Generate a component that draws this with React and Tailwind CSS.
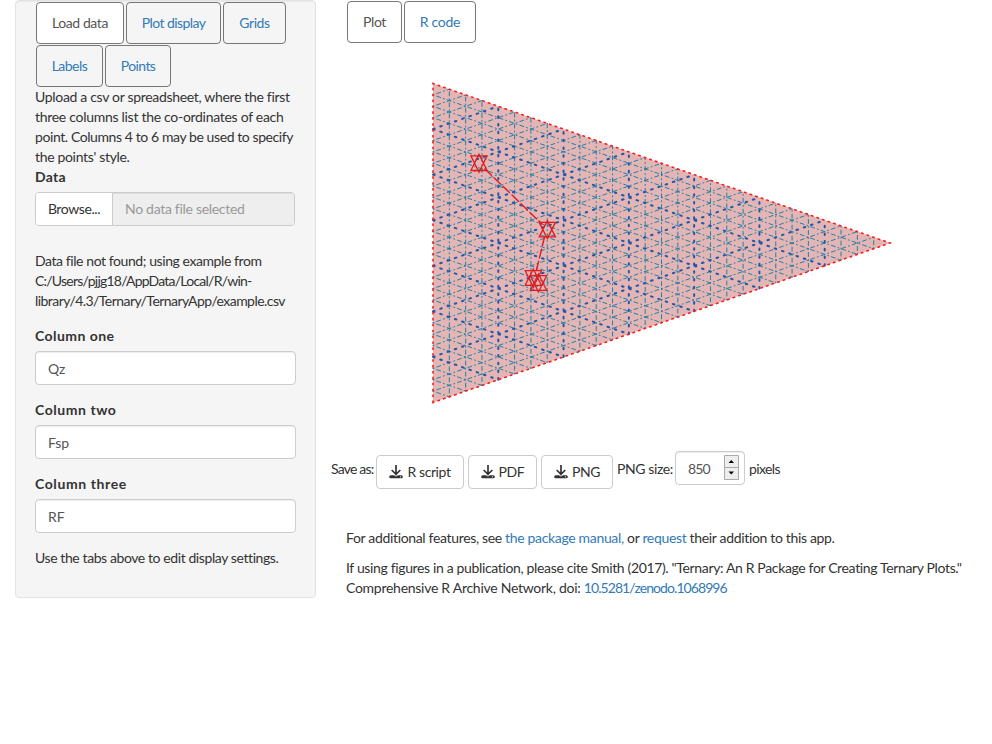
import React from "react";

const LEFT = 433;
const TOP = 83.5;
const BOTTOM = 402.5;
const TIP_X = 890;
const TIP_Y = 243;

function gridLines() {
  const minor = [];
  const major = [];
  const n = 28;
  for (let k = 1; k < n; k++) {
    const f = k / n;
    const x = LEFT + (TIP_X - LEFT) * f;
    const yTop = TOP + (TIP_Y - TOP) * f;
    const yBot = BOTTOM + (TIP_Y - BOTTOM) * f;
    const side = TOP + (BOTTOM - TOP) * f;
    const xr = LEFT + (TIP_X - LEFT) * (1 - f);
    const segs = [
      [x, yBot, x, yTop],
      [LEFT, side, xr, BOTTOM + (TIP_Y - BOTTOM) * (1 - f)],
      [LEFT, TOP + BOTTOM - side, xr, TOP + (TIP_Y - TOP) * (1 - f)],
    ];
    (k % 4 === 0 ? major : minor).push(...segs);
  }
  return { minor, major };
}

const toPath = (segs) => segs.map(([a, b, c, d]) => `M${a} ${b}L${c} ${d}`).join("");

function Star({ x, y }) {
  const apex = 9;
  const base = 7.3;
  const w = 8.1;
  return (
    <path
      d={`M${x} ${y - apex}L${x + w} ${y + base}H${x - w}ZM${x} ${y + apex}L${x + w} ${y - base}H${x - w}Z`}
      strokeWidth="1.3"
    />
  );
}

function TernaryPlot() {
  const { minor, major } = gridLines();
  const triangle = `M${LEFT} ${BOTTOM}V${TOP}L${TIP_X} ${TIP_Y}Z`;
  return (
    <svg className="block h-[400px] w-[645px]" viewBox="331 45 645 400" fill="none" strokeLinecap="round">
      <path d={triangle} fill="#e3b5b5" />
      <path d={toPath(minor)} stroke="#2380a4" strokeWidth="1" strokeDasharray="1 3 4 3" />
      <path d={toPath(major)} stroke="#2058ac" strokeWidth="2" strokeDasharray="1.6 6.1" />
      <path d={triangle} stroke="#f81c1c" strokeWidth="1.6" strokeDasharray="1.5 4.4" />
      <g stroke="#e31a1c">
        <path d="M485 169L542 224M544.5 237L536.5 270" strokeWidth="1.4" strokeDasharray="9 3.5" />
        <Star x={479} y={163.2} />
        <Star x={547.3} y={229.6} />
        <Star x={533.3} y={278} />
        <Star x={538.5} y={283} />
      </g>
    </svg>
  );
}

function Tab({ children, active, className }) {
  return (
    <button
      className={`h-[42px] shrink-0 whitespace-nowrap rounded border border-[#777] text-center ${
        active ? "bg-white text-[#555]" : "text-[#337ab7]"
      } ${className}`}
    >
      {children}
    </button>
  );
}

function Line({ children, className = "" }) {
  return <span className={`block whitespace-nowrap ${className}`}>{children}</span>;
}

function Field({ label, value, className }) {
  return (
    <div className="mb-[15px]">
      <label className={`mb-[5px] block h-5 font-bold ${className}`}>{label}</label>
      <input
        readOnly
        value={value}
        className="block h-[34px] w-[261px] rounded border border-[#ccc] bg-white px-3 pt-px text-[#555] shadow-[inset_0_1px_1px_rgba(0,0,0,0.075)] outline-none"
      />
    </div>
  );
}

function DownloadIcon() {
  return (
    <svg className="mr-1 h-[14px] w-[14px]" viewBox="0 0 14 14" fill="none" stroke="#333" strokeWidth="1.7">
      <path d="M7 0V9M2.7 5L7 9.3L11.3 5" />
      <path d="M1.7 11.7H12.3" strokeWidth="3" strokeLinecap="round" />
      <path d="M4.2 9L7 11.2L9.8 9" stroke="#fff" strokeWidth="0.8" />
      <circle cx="11.5" cy="11.8" r="0.6" fill="#fff" stroke="none" />
    </svg>
  );
}

function SaveButton({ children, className }) {
  return (
    <button
      className={`mt-1 flex h-[34px] items-center justify-center whitespace-nowrap rounded border border-[#ccc] bg-white tracking-[-0.4px] ${className}`}
    >
      <DownloadIcon />
      <span>{children}</span>
    </button>
  );
}

export default function App() {
  return (
    <div className="flex h-[744px] w-[992px] overflow-hidden bg-white font-['Lato','Gill_Sans',sans-serif] text-[14px] leading-5 text-[#333]">
      <aside className="ml-[15px] h-[598px] w-[301px] shrink-0 rounded border border-[#e3e3e3] bg-[#f5f5f5] pl-[19px] shadow-[inset_0_1px_1px_rgba(0,0,0,0.05)]">
        <div className="ml-px mt-px flex flex-wrap gap-x-[2px] gap-y-px">
          <Tab active className="w-[88px] tracking-[-0.42px]">Load data</Tab>
          <Tab className="w-[95px] tracking-[-0.58px]">Plot display</Tab>
          <Tab className="w-[63px] tracking-[-0.4px]">Grids</Tab>
          <Tab className="w-[67px] tracking-[-0.5px]">Labels</Tab>
          <Tab className="w-[66px] tracking-[-0.6px]">Points</Tab>
        </div>
        <div>
          <Line className="tracking-[-0.32px]">Upload a csv or spreadsheet, where the first</Line>
          <Line className="tracking-[-0.29px]">three columns list the co-ordinates of each</Line>
          <Line className="tracking-[-0.41px]">point. Columns 4 to 6 may be used to specify</Line>
          <Line className="tracking-[-0.33px]">the points' style.</Line>
        </div>
        <div className="mb-[5px] font-bold tracking-[0.3px]">Data</div>
        <div className="flex h-[34px] w-[260px] overflow-hidden rounded border border-[#ccc]">
          <button className="w-[77px] border-r border-[#ccc] bg-white tracking-[-0.4px]">Browse...</button>
          <div className="flex-1 bg-[#eee] pl-3 leading-8 tracking-[-0.3px] text-[#999] shadow-[inset_0_1px_1px_rgba(0,0,0,0.075)]">
            No data file selected
          </div>
        </div>
        <div className="mb-[15px] mt-[25px]">
          <Line className="tracking-[-0.42px]">Data file not found; using example from</Line>
          <Line className="tracking-[-0.77px]">C:/Users/pjjg18/AppData/Local/R/win-</Line>
          <Line className="tracking-[-0.55px]">library/4.3/Ternary/TernaryApp/example.csv</Line>
        </div>
        <Field label="Column one" value="Qz" className="tracking-[0.45px]" />
        <Field label="Column two" value="Fsp" className="tracking-[0.55px]" />
        <Field label="Column three" value="RF" className="tracking-[0.6px]" />
        <Line className="tracking-[-0.41px]">Use the tabs above to edit display settings.</Line>
      </aside>
      <main className="ml-[15px] flex w-[645px] flex-col">
        <div className="ml-4 mt-px flex h-11 gap-[2px]">
          <Tab active className="w-[55px] tracking-[-0.4px]">Plot</Tab>
          <Tab className="w-[72px] tracking-[-0.3px]">R code</Tab>
        </div>
        <TernaryPlot />
        <div className="mt-[6px] flex h-[38px] whitespace-nowrap">
          <span className="mt-2 w-[45px] tracking-[-0.8px]">Save as:</span>
          <SaveButton className="w-[88px]">R script</SaveButton>
          <SaveButton className="ml-1 w-[69px]">PDF</SaveButton>
          <SaveButton className="ml-1 w-[72px]">PNG</SaveButton>
          <span className="ml-1 mt-2 w-[58px] tracking-[-0.4px]">PNG size:</span>
          <div className="flex h-[34px] w-[70px] items-center justify-between rounded border border-[#ccc] pl-3 pr-[5px] text-[#555] shadow-[inset_0_1px_1px_rgba(0,0,0,0.075)]">
            <span className="pt-px tracking-[-0.9px]">850</span>
            <svg className="mb-[2px] h-[25px] w-[15px]" viewBox="0 0 15 25">
              <path d="M.5 .5H14.5V24.5H.5ZM.5 12.5H14.5" fill="#eee" stroke="#aaa" />
              <path d="M4.5 8H10L7.25 5ZM4.5 16.5H10L7.25 19.5Z" fill="#000" />
            </svg>
          </div>
          <span className="ml-1 mt-2 tracking-[-0.6px]">pixels</span>
        </div>
        <div className="ml-[15px] mt-[39px] whitespace-nowrap">
          <p className="mb-[10px] tracking-[-0.335px]">
            For additional features, see <a className="text-[#337ab7]">the package manual,</a> or{" "}
            <a className="text-[#337ab7]">request</a> their addition to this app.
          </p>
          <Line className="tracking-[-0.353px]">
            If using figures in a publication, please cite Smith (2017). "Ternary: An R Package for Creating Ternary Plots."
          </Line>
          <Line>
            <span className="tracking-[-0.27px]">Comprehensive R Archive Network, doi: </span>
            <a className="tracking-[-0.93px] text-[#337ab7]">10.5281/zenodo.1068996</a>
          </Line>
        </div>
      </main>
    </div>
  );
}
